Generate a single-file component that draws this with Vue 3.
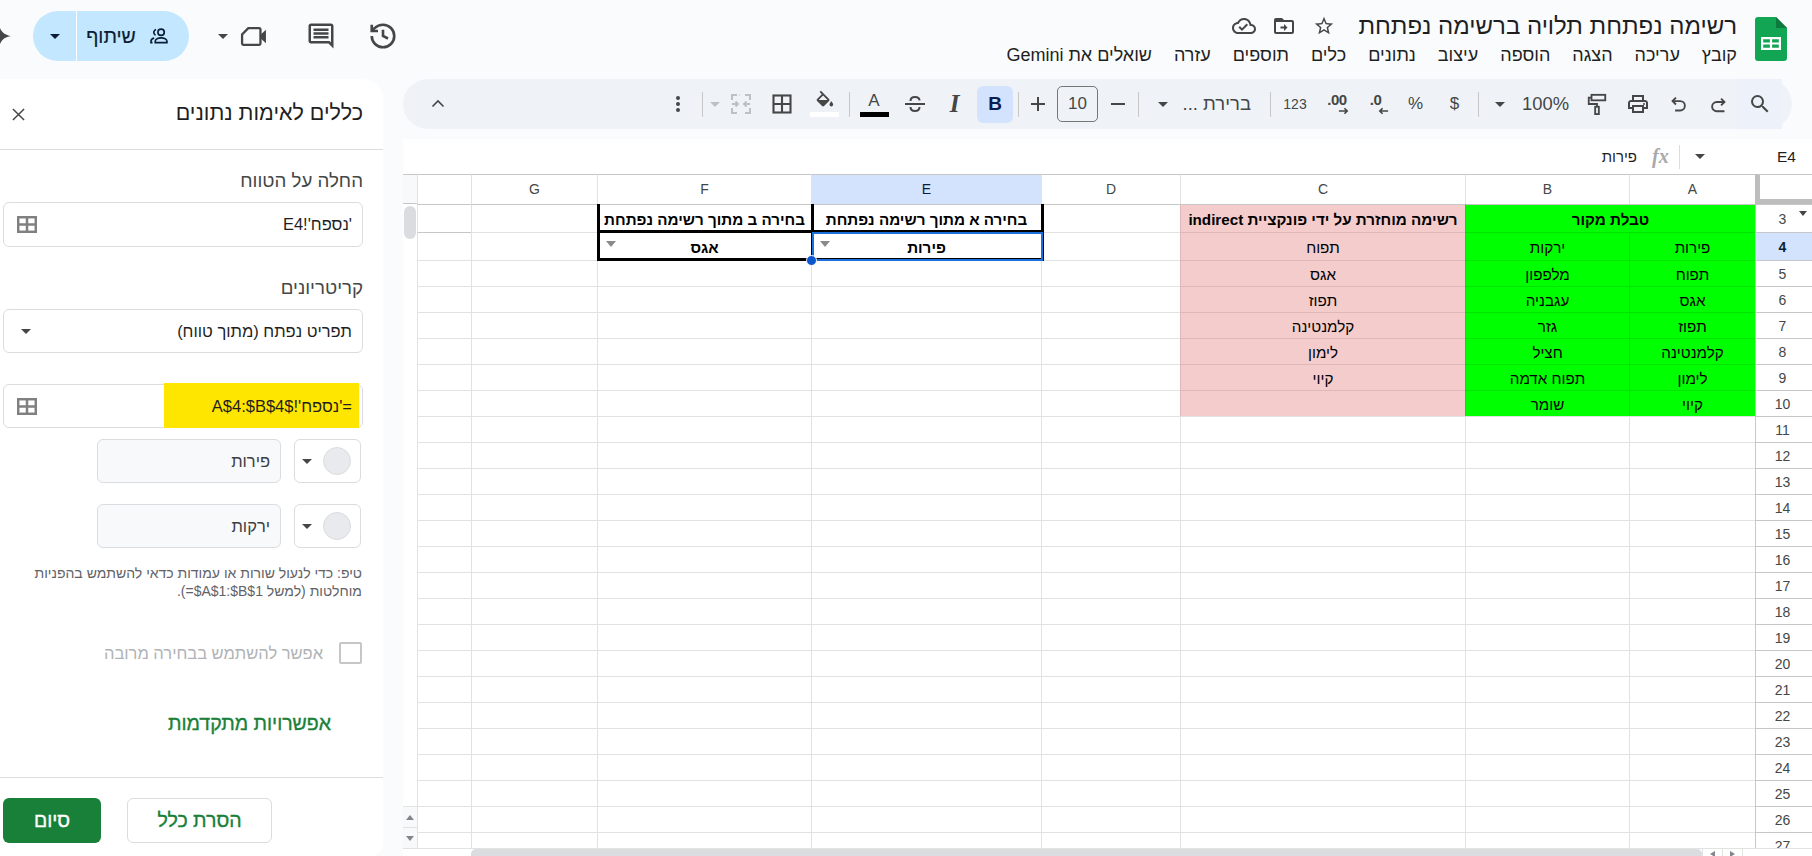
<script setup>
const menu = ['קובץ','עריכה','הצגה','הוספה','עיצוב','נתונים','כלים','תוספים','עזרה','שואלים את Gemini']
const colHeads = [
  { t: '', k: 'x' }, { t: 'G', k: 'g' }, { t: 'F', k: 'f' }, { t: 'E', k: 'e', sel: true },
  { t: 'D', k: 'd' }, { t: 'C', k: 'c' }, { t: 'B', k: 'b' }, { t: 'A', k: 'a' }
]
const colA = ['פירות','תפוח','אגס','תפוז','קלמנטינה','לימון','קיוי']
const colB = ['ירקות','מלפפון','עגבניה','גזר','חציל','תפוח אדמה','שומר']
const colC = ['תפוח','אגס','תפוז','קלמנטינה','לימון','קיוי','']

function rowCells(n) {
  if (n === 3) {
    return [
      { k: 'x', t: '' }, { k: 'g', t: '' },
      { k: 'f', t: 'בחירה ב מתוך רשימה נפתחת', bold: true },
      { k: 'e', t: 'בחירה א מתוך רשימה נפתחת', bold: true },
      { k: 'd', t: '' },
      { k: 'c', t: 'רשימה מוחזרת על ידי פונקציית indirect', bold: true, pink: true, nowrap: true },
      { k: 'ab', t: 'טבלת מקור', bold: true, green: true, span: true }
    ]
  }
  const i = n - 4
  const inData = i >= 0 && i < 7
  return [
    { k: 'x', t: '' }, { k: 'g', t: '' },
    { k: 'f', t: n === 4 ? 'אגס' : '', bold: true, drop: n === 4 },
    { k: 'e', t: n === 4 ? 'פירות' : '', bold: true, drop: n === 4 },
    { k: 'd', t: '' },
    { k: 'c', t: inData ? colC[i] : '', pink: inData },
    { k: 'b', t: inData ? colB[i] : '', green: inData },
    { k: 'a', t: inData ? colA[i] : '', green: inData }
  ]
}
const rows = []
for (let n = 3; n <= 27; n++) rows.push({ n, cells: rowCells(n) })
</script>

<template>
  <div class="app">
    <header class="topbar">
      <div class="actions">
        <svg class="gem" viewBox="0 0 24 24"><path d="M12 0c1 7 5 11 12 12-7 1-11 5-12 12-1-7-5-11-12-12 7-1 11-5 12-12z" fill="#444746"/></svg>
        <div class="share">
          <div class="share-drop"><span class="caret dark"></span></div>
          <div class="share-main">
            <span class="share-text">שיתוף</span>
            <svg class="i20 share-ic" viewBox="0 0 24 24" fill="none" stroke="#0b1c34" stroke-width="2"><circle cx="14.5" cy="7.5" r="3.8"/><path d="M7.5 20v-1.8c0-2.6 3.6-4 7-4s7 1.4 7 4V20z"/><path d="M8.500 4.200a3.700 3.700 0 0 0-.7 6.900M4.200 20H2.400v-1.600c0-2 1.500-3.300 3.800-3.800"/></svg>
          </div>
        </div>
        <span class="caret video-caret"></span>
        <svg class="video" viewBox="0 0 26 24" fill="none"><path d="M8 4h10.500a1.200 1.200 0 0 1 1.200 1.200v13.600a1.200 1.200 0 0 1-1.200 1.200H3.200A1.200 1.200 0 0 1 2 18.800V10z" stroke="#444746" stroke-width="2.200"/><path d="M20 10l5-4.500v13L20 14z" fill="#444746"/></svg>
        <svg class="comment" viewBox="0 0 24 24"><path fill="#444746" d="M21.990 4c0-1.100-.890-2-1.990-2H4c-1.100 0-2 .9-2 2v12c0 1.100.9 2 2 2h14l4 4-.010-18zM20 4v13.170L18.830 16H4V4h16zM6 12h12v2H6zm0-3h12v2H6zm0-3h12v2H6z"/></svg>
        <svg class="history" viewBox="0 0 24 24" fill="none" stroke="#444746" stroke-width="2.100"><path d="M3 12a9 9 0 1 0 9-9 9.750 9.750 0 0 0-6.740 2.740L3 8"/><path d="M3 3v5h5"/><path d="M12 7v5l4 2"/></svg>
      </div>
      <div class="doc">
        <div class="title-row">
          <svg class="doc-ic cloud" viewBox="0 0 24 24"><path fill="#444746" d="M19.350 10.040C18.670 6.590 15.640 4 12 4 9.110 4 6.600 5.640 5.350 8.040 2.340 8.360 0 10.910 0 14c0 3.310 2.690 6 6 6h13c2.760 0 5-2.240 5-5 0-2.640-2.050-4.780-4.650-4.960zM19 18H6c-2.210 0-4-1.790-4-4 0-2.050 1.530-3.760 3.560-3.970l1.070-.11.5-.95C8.080 7.140 9.940 6 12 6c2.620 0 4.880 1.860 5.390 4.430l.3 1.500 1.530.11c1.560.1 2.780 1.410 2.780 2.960 0 1.650-1.350 3-3 3zm-9-3.820l-2.090-2.090L6.500 13.500 10 17l6.010-6.010-1.410-1.410z"/></svg>
          <svg class="doc-ic folder" viewBox="0 0 24 24"><path fill="#444746" d="M20 6h-8l-2-2H4c-1.100 0-2 .9-2 2v12c0 1.100.9 2 2 2h16c1.100 0 2-.9 2-2V8c0-1.100-.9-2-2-2zm0 12H4V8h16v10zm-8-3.500H8.500v-2H12V10l3.500 3.500L12 17z"/></svg>
          <svg class="doc-ic star" viewBox="0 0 24 24"><path fill="#444746" d="M22 9.240l-7.190-.62L12 2 9.190 8.630 2 9.240l5.460 4.730L5.820 21 12 17.270 18.180 21l-1.630-7.030L22 9.240zM12 15.400l-3.760 2.270 1-4.280-3.320-2.880 4.380-.38L12 6.100l1.710 4.040 4.380.38-3.320 2.880 1 4.280L12 15.400z"/></svg>
          <span class="title">רשימה נפתחת תלויה ברשימה נפתחת</span>
        </div>
        <nav class="menu">
          <span v-for="m in menu" :key="m">{{ m }}</span>
        </nav>
      </div>
      <svg class="logo" viewBox="0 0 32 44">
        <path d="M3 0h18l11 11v30a3 3 0 0 1-3 3H3a3 3 0 0 1-3-3V3a3 3 0 0 1 3-3z" fill="#12a553"/>
        <path d="M21 0l11 11H21z" fill="#0c7a3d"/>
        <path d="M6 20h20v13H6zm2.200 2.200v3.200h6.700v-3.200zm8.900 0v3.200h6.700v-3.200zm-8.900 5.400v3.200h6.700v-3.200zm8.900 0v3.200h6.700v-3.200z" fill="#fff" fill-rule="evenodd"/>
      </svg>
    </header>

    <div class="main">
      <aside class="panel">
        <div class="panel-head">
          <svg class="close" viewBox="0 0 14 14" fill="none" stroke="#444746" stroke-width="1.600"><path d="M1 1l12 12M13 1L1 13"/></svg>
          <span class="panel-title">כללים לאימות נתונים</span>
        </div>
        <div class="panel-body">
          <label class="label first">החלה על הטווח</label>
          <div class="field tall">
            <svg class="grid-ic" viewBox="0 0 20 17" fill="none" stroke="#808080" stroke-width="2.500"><rect x="1.200" y="1.200" width="17.600" height="14.600"/><path d="M10 1v15M1 8.500h18"/></svg>
            <span class="val">'נספח'!E4</span>
          </div>
          <label class="label second">קריטריונים</label>
          <div class="field sel-field">
            <span class="caret"></span>
            <span class="val">תפריט נפתח (מתוך טווח)</span>
          </div>
          <div class="field third">
            <div class="yellow"></div>
            <svg class="grid-ic" viewBox="0 0 20 17" fill="none" stroke="#808080" stroke-width="2.500"><rect x="1.200" y="1.200" width="17.600" height="14.600"/><path d="M10 1v15M1 8.500h18"/></svg>
            <span class="val on-yellow">='נספח'!$A$4:$B$4</span>
          </div>
          <div class="opt-row r1">
            <div class="opt-input">פירות</div>
            <div class="opt-color"><span class="caret"></span><span class="dot"></span></div>
          </div>
          <div class="opt-row r2">
            <div class="opt-input">ירקות</div>
            <div class="opt-color"><span class="caret"></span><span class="dot"></span></div>
          </div>
          <p class="tip">טיפ: כדי לנעול שורות או עמודות כדאי להשתמש בהפניות מוחלטות (למשל <bdi dir="ltr">=$A$1:$B$1</bdi>).</p>
          <div class="check-row">
            <span class="check-label">אפשר להשתמש בבחירה מרובה</span>
            <span class="check"></span>
          </div>
          <div class="advanced">אפשרויות מתקדמות</div>
        </div>
        <div class="panel-foot">
          <button class="btn done">סיום</button>
          <button class="btn remove">הסרת כלל</button>
        </div>
      </aside>

      <section class="work">
        <div class="toolbar">
          <div class="w70 tb"><svg class="i18" viewBox="0 0 18 18" fill="none" stroke="#444746" stroke-width="1.600"><path d="M3.500 11.500 9 6l5.500 5.500"/></svg></div>
          <div class="tb-space"></div>
          <div class="w40 tb"><svg class="i24" viewBox="0 0 24 24"><circle cx="12" cy="6" r="2" fill="#444746"/><circle cx="12" cy="12" r="2" fill="#444746"/><circle cx="12" cy="18" r="2" fill="#444746"/></svg></div>
          <span class="sep s-a"></span>
          <div class="w20 tb"><span class="caret faint"></span></div>
          <div class="w32 tb"><svg class="i22" viewBox="0 0 22 22" fill="none" stroke="#bdc1c6" stroke-width="2"><path d="M2 7V2h5M2 15v5h5M9.500 2h-.5M20 7V2h-5M20 15v5h-5M2 11h6M5.500 8.500 8 11l-2.500 2.500M20 11h-6M16.500 8.500 14 11l2.500 2.500"/></svg></div>
          <div class="w50 tb"><svg class="i20" viewBox="0 0 20 20" fill="none" stroke="#444746" stroke-width="2.100"><rect x="1.500" y="1.500" width="17" height="17"/><path d="M10 1.500v17M1.500 10h17"/></svg></div>
          <div class="w34 tb col">
            <svg class="fill-ic" viewBox="0 0 24 19"><path fill="#444746" fill-rule="evenodd" d="M17.560 8.940 8.620 0 7.210 1.410l2.380 2.380-5.150 5.150c-.59.59-.59 1.540 0 2.120l5.500 5.500c.29.29.68.44 1.060.44s.77-.15 1.060-.44l5.500-5.500c.59-.58.59-1.530 0-2.120zM6.210 10 11 5.210 15.790 10H6.210zM20 11.500s-2 2.170-2 3.500c0 1.100.9 2 2 2s2-.9 2-2c0-1.330-2-3.500-2-3.500z"/></svg>
            <span class="bar white"></span>
          </div>
          <span class="sep s-b"></span>
          <div class="w48 tb col">
            <span class="a-letter">A</span>
            <span class="bar black"></span>
          </div>
          <div class="w34 tb"><svg class="i22" viewBox="0 0 22 22" fill="none" stroke="#444746" stroke-width="2"><path d="M1 11h20"/><path d="M6.500 8c0-2.500 2-4 4.500-4s4.500 1.200 4.500 3.500M15.500 14c0 2.500-2 4-4.500 4s-4.500-1.500-4.500-4"/></svg></div>
          <div class="w45 tb"><span class="italic">I</span></div>
          <div class="w36 tb bold-on"><span class="bold-letter">B</span></div>
          <span class="sep s-c"></span>
          <div class="w38 tb"><svg class="i18" viewBox="0 0 18 18" stroke="#444746" stroke-width="2"><path d="M2 9h14M9 2v14"/></svg></div>
          <div class="sizebox">10</div>
          <div class="w40 tb"><svg class="i18" viewBox="0 0 18 18" stroke="#444746" stroke-width="2"><path d="M2 9h14"/></svg></div>
          <span class="sep"></span>
          <div class="fontsel">
            <span class="caret"></span>
            <span class="fontname">ברירת ...</span>
          </div>
          <span class="sep"></span>
          <div class="w48 tb txt small">123</div>
          <div class="w36 tb numfmt">
            <span class="numtxt">.00</span>
            <svg class="numarrow" viewBox="0 0 12 8" fill="none" stroke="#444746" stroke-width="1.800"><path d="M1 4h9M7 1l3 3-3 3"/></svg>
          </div>
          <div class="w41 tb numfmt">
            <span class="numtxt">.0</span>
            <svg class="numarrow shift" viewBox="0 0 12 8" fill="none" stroke="#444746" stroke-width="1.800"><path d="M11 4H2M5 1 2 4l3 3"/></svg>
          </div>
          <div class="w39 tb txt">%</div>
          <div class="w39 tb txt">$</div>
          <span class="sep s-d"></span>
          <div class="zoomsel">
            <span class="caret"></span>
            <span class="zoomval">100%</span>
          </div>
          <div class="w42 tb"><svg class="i22" viewBox="0 0 22 24" fill="none" stroke="#444746" stroke-width="2"><rect x="5" y="2" width="15" height="6"/><path d="M5 5H2v7h9v3"/><rect x="9" y="15" width="4" height="8"/></svg></div>
          <div class="w40 tb"><svg class="i24" viewBox="0 0 24 24"><path fill="#444746" d="M19 8h-1V3H6v5H5c-1.660 0-3 1.340-3 3v6h4v4h12v-4h4v-6c0-1.660-1.340-3-3-3zM8 5h8v3H8V5zm8 12v2H8v-4h8v2zm2-2v-2H6v2H4v-4c0-.55.45-1 1-1h14c.55 0 1 .45 1 1v4h-2z"/><circle cx="18" cy="12" r="1" fill="#444746"/></svg></div>
          <div class="w41 tb"><svg class="i17" viewBox="0 0 20 20" fill="none" stroke="#444746" stroke-width="2.200"><path d="M7 2 3 6l4 4"/><path d="M3 6h9a5 5 0 0 1 0 11H6"/></svg></div>
          <div class="w38 tb"><svg class="i17" viewBox="0 0 20 20" fill="none" stroke="#444746" stroke-width="2.200"><path d="M13 3l4 4-4 4"/><path d="M17 7H8a5 5 0 0 0 0 11h9"/></svg></div>
          <div class="w45 tb searchbox"><svg class="i24" viewBox="0 0 24 24"><path fill="#444746" d="M15.500 14h-.79l-.28-.27A6.471 6.471 0 0 0 16 9.500 6.500 6.500 0 1 0 9.500 16c1.610 0 3.090-.59 4.230-1.570l.27.28v.79l5 4.990L20.490 19l-4.990-5zm-6 0C7.010 14 5 11.990 5 9.500S7.010 5 9.500 5 14 7.010 14 9.500 11.990 14 9.500 14z"/></svg></div>
        </div>

        <div class="sheet">
          <div class="formula">
            <span class="f-val">פירות</span>
            <span class="fx">fx</span>
            <span class="f-sep"></span>
            <span class="caret f-caret"></span>
            <span class="namebox">E4</span>
          </div>
          <div class="grid-wrap">
            <div class="vscroll">
              <div class="vs-head"></div>
              <div class="vs-thumb"></div>
              <div class="vs-fill"></div>
              <div class="vs-btn"><span class="tri up"></span></div>
              <div class="vs-btn"><span class="tri down"></span></div>
            </div>
            <div class="grid">
              <div v-for="h in colHeads" :key="h.k" class="head" :class="{ sel: h.sel }">{{ h.t }}</div>
              <div class="corner"></div>
              <template v-for="r in rows" :key="r.n">
                <div
                  v-for="c in r.cells"
                  :key="c.k"
                  class="cell"
                  :class="{ bold: c.bold, green: c.green, pink: c.pink, span2: c.span, tight: c.nowrap }"
                >
                  <span v-if="c.drop" class="tri cell-drop"></span>
                  <span class="cell-text">{{ c.t }}</span>
                </div>
                <div class="rownum" :class="{ sel: r.n === 4 }">
                  <span>{{ r.n }}</span>
                  <span v-if="r.n === 3" class="tri freeze"></span>
                </div>
              </template>
              <div class="thick"></div>
              <div class="selbox"></div>
              <div class="handle"></div>
            </div>
          </div>
          <div class="hbar">
            <div class="hb-space"></div>
            <div class="hb-thumb"></div>
            <div class="hb-btn"><span class="hb-tri left"></span></div>
            <div class="hb-btn"><span class="hb-tri right"></span></div>
            <div class="hb-btn"></div>
          </div>
        </div>
      </section>
    </div>
  </div>
</template>

<style scoped>
.app { width: 1812px; height: 856px; overflow: hidden; background: #f9fbfd; display: flex; flex-direction: column; font-family: "Liberation Sans", Arial, sans-serif; color: #1f1f1f; }

/* top bar */
.topbar { height: 79px; flex: none; display: flex; align-items: flex-start; position: relative; }
.actions { display: flex; align-items: center; height: 50px; margin-top: 11px; margin-left: -13px; }
.gem { width: 24px; height: 24px; flex: none; }
.share { margin-left: 22px; width: 156px; height: 50px; background: #c2e7ff; border-radius: 25px; display: flex; overflow: hidden; }
.share-drop { width: 42px; display: flex; align-items: center; justify-content: center; border-right: 1px solid #fff; padding-left: 1px; box-sizing: content-box; }
.share-main { flex: 1; display: flex; align-items: center; padding-left: 9px; color: #0b1c34; }
.share-text { font-size: 19.500px; direction: rtl; width: 50px; text-align: center; -webkit-text-stroke: 0.200px #0b1c34; }
.share-ic { margin-left: 13px; }
.i17 { width: 17px; height: 17px; }
.i18 { width: 18px; height: 18px; }
.i20 { width: 20px; height: 20px; }
.i22 { width: 22px; height: 22px; }
.i24 { width: 24px; height: 24px; }
.caret { display: inline-block; width: 0; height: 0; border-left: 5px solid transparent; border-right: 5px solid transparent; border-top: 5px solid #444746; flex: none; }
.caret.dark { border-top-color: #0b1c34; }
.caret.faint { border-top-color: #bdc1c6; }
.video-caret { margin-left: 29px; }
.video { width: 27px; height: 25px; margin-left: 12px; flex: none; }
.comment { width: 30px; height: 30px; margin-left: 39px; flex: none; }
.history { width: 30px; height: 30px; margin-left: 32px; flex: none; }

.doc { margin-left: auto; margin-right: 18px; display: flex; flex-direction: column; align-items: flex-end; }
.title-row { display: flex; align-items: center; height: 32px; margin-top: 10px; }
.title { font-size: 24px; direction: rtl; color: #1f1f1f; margin-left: 23px; white-space: nowrap; }
.doc-ic { flex: none; }
.cloud { width: 24px; height: 24px; }
.folder { width: 24px; height: 24px; margin-left: 16px; }
.star { width: 22px; height: 22px; margin-left: 17px; }
.menu { display: flex; flex-direction: row; direction: rtl; gap: 22px; font-size: 18px; margin-top: 2px; line-height: 22px; color: #1f1f1f; white-space: nowrap; }
.logo { width: 32px; height: 44px; margin-top: 17px; margin-right: 25px; flex: none; }

/* main */
.main { flex: 1; display: flex; min-height: 0; }
.panel { width: 383px; flex: none; background: #fff; border-radius: 0 20px 12px 0; display: flex; flex-direction: column; box-sizing: border-box; }
.panel-head { height: 70px; flex: none; border-bottom: 1px solid #dadce0; box-sizing: content-box; display: flex; align-items: center; justify-content: space-between; padding: 0 20px 0 12px; }
.close { width: 13px; height: 13px; }
.panel-title { font-size: 21.500px; direction: rtl; color: #1f1f1f; margin-top: -2px; }
.panel-body { flex: 1; padding: 0 20px 0 3px; display: flex; flex-direction: column; min-height: 0; }
.label { display: block; direction: rtl; font-size: 18.700px; line-height: 24px; color: #444746; }
.label.first { margin-top: 19px; }
.label.second { margin-top: 29px; }
.field { position: relative; margin-top: 9px; width: 360px; height: 44px; box-sizing: border-box; border: 1px solid #dadce0; border-radius: 6px; display: flex; align-items: center; justify-content: space-between; padding: 0 10px 0 13px; background: #fff; flex: none; }
.field.tall { height: 45px; }
.field.third { margin-top: 31px; }
.sel-field { padding-left: 17px; }
.val { direction: rtl; font-size: 16.500px; color: #1f1f1f; position: relative; white-space: nowrap; }
.grid-ic { width: 20px; height: 17px; flex: none; }
.yellow { position: absolute; left: 160px; top: -2px; width: 195px; height: 45px; background: #ffe600; }
.opt-row { display: flex; justify-content: space-between; width: 358px; margin-left: 0; flex: none; height: 44px; padding-left: 94px; padding-right: 0; box-sizing: border-box; }
.opt-row.r1 { margin-top: 11px; }
.opt-row.r2 { margin-top: 21px; }
.opt-input { width: 184px; height: 44px; box-sizing: border-box; background: #f8f9fa; border: 1px solid #dadce0; border-radius: 6px; direction: rtl; font-size: 16.500px; line-height: 42px; padding-right: 10px; color: #3c4043; }
.opt-color { width: 67px; height: 44px; box-sizing: border-box; border: 1px solid #dadce0; border-radius: 6px; display: flex; align-items: center; padding-left: 7px; gap: 11px; background: #fff; }
.dot { width: 28px; height: 28px; border-radius: 50%; background: #e8eaed; border: 1px solid #dadce0; box-sizing: border-box; }
.tip { margin: 16px 0 0 26px; width: 333px; direction: rtl; font-size: 14px; line-height: 18px; color: #5f6368; }
.check-row { display: flex; justify-content: flex-end; align-items: center; margin-top: 42px; width: 359px; height: 22px; gap: 16px; }
.check-label { direction: rtl; font-size: 16.500px; color: #b1b3b6; }
.check { width: 23px; height: 22px; box-sizing: border-box; border: 2px solid #c4c7c5; border-radius: 2px; }
.advanced { direction: rtl; margin-top: 47px; width: 328px; font-size: 19.500px; line-height: 24px; color: #188038; -webkit-text-stroke: 0.350px #188038; }
.panel-foot { height: 79px; flex: none; border-top: 1px solid #dadce0; box-sizing: border-box; padding: 20px 0 0 3px; display: flex; gap: 26px; }
.btn { height: 45px; box-sizing: border-box; border-radius: 6px; font-family: inherit; font-size: 19.500px; direction: rtl; padding: 0; }
.done { width: 98px; background: #188038; border: none; color: #fff; -webkit-text-stroke: 0.350px #fff; }
.remove { width: 145px; background: #fff; border: 1px solid #dadce0; color: #188038; -webkit-text-stroke: 0.350px #188038; }

/* right */
.work { flex: 1; margin-left: 20px; display: flex; flex-direction: column; min-width: 0; }
.toolbar { height: 50px; flex: none; width: 1389px; background: #eff3f8; border-radius: 25px; display: flex; align-items: center; padding-right: 10px; box-sizing: border-box; margin-bottom: 10px; }
.tb { height: 100%; display: flex; align-items: center; justify-content: center; flex: none; }
.tb.col { flex-direction: column; justify-content: flex-end; padding-bottom: 12px; box-sizing: border-box; }
.tb-space { flex: 1; }
.w20 { width: 20px; } .w32 { width: 32px; } .w34 { width: 34px; } .w36 { width: 36px; } .w38 { width: 38px; }
.w39 { width: 39px; } .w40 { width: 40px; } .w41 { width: 41px; } .w42 { width: 42px; } .w45 { width: 45px; }
.w48 { width: 48px; } .w50 { width: 50px; } .w70 { width: 70px; }
.sep { width: 1px; height: 25px; background: #c7c7c7; flex: none; }
.s-a { margin: 0 2px 0 4px; }
.s-b { margin: 0 0 0 8px; }
.s-c { margin-left: 5px; }
.s-d { margin-left: 4px; }
.fill-ic { width: 22px; height: 19px; margin-bottom: 3px; }
.bar { width: 29px; height: 5px; display: block; }
.bar.white { background: #fff; }
.bar.black { background: #000; }
.a-letter { font-size: 17px; line-height: 18px; color: #444746; margin-bottom: 2px; }
.italic { font-family: "Liberation Serif", serif; font-style: italic; font-weight: 700; font-size: 25px; color: #444746; }
.bold-on { background: #d3e3fd; border-radius: 6px; height: 37px; }
.bold-letter { font-weight: 700; font-size: 19px; color: #0b1c50; }
.sizebox { width: 41px; height: 36px; box-sizing: border-box; flex: none; border: 1px solid #747775; border-radius: 5px; text-align: center; line-height: 34px; font-size: 17px; color: #444746; }
.fontsel { width: 131px; flex: none; display: flex; align-items: center; justify-content: space-between; padding: 0 19px 0 19px; box-sizing: border-box; }
.fontname { direction: rtl; font-size: 18.500px; color: #444746; white-space: nowrap; }
.txt { font-size: 17px; color: #444746; }
.txt.small { font-size: 14px; }
.numfmt { flex-direction: column; gap: 0; }
.numtxt { font-size: 15px; line-height: 14px; color: #444746; font-weight: 700; letter-spacing: -0.500px; }
.numarrow { width: 11px; height: 8px; margin-left: 12px; }
.numarrow.shift { margin-left: 16px; }
.zoomsel { width: 97px; flex: none; display: flex; align-items: center; padding-left: 16px; gap: 17px; box-sizing: border-box; }
.zoomval { font-size: 18.400px; color: #444746; white-space: nowrap; }
.searchbox { background: #edf2fa; }

.sheet { flex: 1; background: #fff; display: flex; flex-direction: column; min-height: 0; }
.formula { height: 35px; flex: none; display: flex; align-items: center; justify-content: flex-end; padding-right: 17px; box-sizing: border-box; }
.f-val { direction: rtl; font-size: 15px; color: #1f1f1f; width: 36px; white-space: nowrap; }
.fx { font-family: "Liberation Serif", serif; font-style: italic; font-weight: 700; font-size: 20px; color: #a7a9ac; margin-left: 15px; width: 18px; }
.f-sep { width: 1px; height: 24px; background: #dadce0; margin-left: 9px; }
.f-caret { margin-left: 15px; }
.namebox { font-size: 15.500px; color: #1f1f1f; margin-left: 72px; width: 18px; }

.grid-wrap { height: 674px; flex: none; display: flex; overflow: hidden; }
.vscroll { width: 14px; flex: none; display: flex; flex-direction: column; background: #fff; }
.vs-head { height: 30px; flex: none; background: #f8f9fa; border-top: 1px solid #c7c7c7; border-bottom: 1px solid #c7c7c7; box-sizing: border-box; }
.vs-thumb { height: 33px; width: 12px; margin: 2px 0 0 1px; background: #dadce0; border-radius: 6px; flex: none; }
.vs-fill { flex: 1; }
.vs-btn { height: 20px; flex: none; background: #f8f9fa; border-top: 1px solid #e1e3e1; display: flex; align-items: center; justify-content: center; }
.tri { display: inline-block; width: 0; height: 0; }
.tri.up { border-left: 4px solid transparent; border-right: 4px solid transparent; border-bottom: 5px solid #80868b; }
.tri.down { border-left: 4px solid transparent; border-right: 4px solid transparent; border-top: 5px solid #80868b; }

.grid { position: relative; flex: 1; min-width: 0; display: grid; grid-template-columns: 54px 126px 214px 230px 139px 285px 164px 126px 57px; grid-template-rows: 30px 28px 28px repeat(23, 26px); direction: ltr; }
.head { border-left: 1px solid #e1e3e1; border-top: 1px solid #c7c7c7; font-size: 14px; color: #444746; display: flex; align-items: center; justify-content: center; box-sizing: border-box; background: #fff; padding-bottom: 2px; }
.head.sel { background: #d3e3fd; color: #0b1c34; }
.corner { border-left: 5px solid #bdbdbd; border-top: 1px solid #c7c7c7; border-bottom: 5px solid #bdbdbd; box-sizing: border-box; background: #fff; }
.cell { position: relative; border-left: 1px solid #e1e3e1; border-top: 1px solid #e1e3e1; box-sizing: border-box; font-size: 15.200px; color: #000; direction: rtl; display: flex; align-items: center; justify-content: center; overflow: hidden; white-space: nowrap; min-width: 0; }
.grid > .cell:nth-child(-n+18) { border-top-color: #c7c7c7; }
.cell.bold { font-weight: 700; }
.cell.green { background: #00ff00; border-color: #00e300; }
.cell.pink { background: #f4cccc; border-color: #dcb8b8; }
.cell.span2 { grid-column: span 2; }
.cell.tight { padding: 0; }
.cell-text { padding-top: 1px; }
.rownum { position: relative; border-left: 1px solid #c7c7c7; border-top: 1px solid #c7c7c7; box-sizing: border-box; font-size: 14px; color: #444746; display: flex; align-items: center; justify-content: center; background: #fff; padding-right: 3px; }
.rownum.sel { background: #d3e3fd; color: #0b1c34; font-weight: 700; }
.tri.freeze { position: absolute; top: 6px; right: 5px; border-left: 4px solid transparent; border-right: 4px solid transparent; border-top: 5px solid #444746; }
.tri.cell-drop { position: absolute; left: 8px; top: 8px; border-left: 5px solid transparent; border-right: 5px solid transparent; border-top: 6px solid #8a8a8a; }

.thick { position: absolute; left: 180px; top: 30px; width: 447px; height: 57px; box-sizing: border-box; border: 3px solid #000; border-top: none; background: linear-gradient(#000, #000) 0 26px / 100% 3px no-repeat, linear-gradient(#000, #000) 211px 0 / 3px 100% no-repeat; pointer-events: none; }
.selbox { position: absolute; left: 395px; top: 58px; width: 231px; height: 29px; box-sizing: border-box; border: 2px solid #1a6fdc; }
.handle { position: absolute; left: 389px; top: 81px; width: 11px; height: 11px; border-radius: 50%; background: #0b57d0; border: 1px solid #fff; box-sizing: border-box; }

.hbar { height: 8px; flex: none; display: flex; border-top: 1px solid #e1e3e1; box-sizing: border-box; }
.hb-space { width: 68px; flex: none; }
.hb-thumb { width: 1231px; height: 7px; background: #dadce0; border-radius: 5px 5px 0 0; flex: none; }
.hb-btn { width: 20px; flex: none; border-left: 1px solid #e1e3e1; box-sizing: border-box; display: flex; justify-content: center; padding-top: 2px; margin-left: 0; background: #fff; }
.hb-btn:first-of-type { margin-left: 2px; }
.hb-tri { width: 0; height: 0; border-top: 3px solid transparent; border-bottom: 3px solid transparent; }
.hb-tri.left { border-right: 5px solid #80868b; }
.hb-tri.right { border-left: 5px solid #80868b; }
</style>
